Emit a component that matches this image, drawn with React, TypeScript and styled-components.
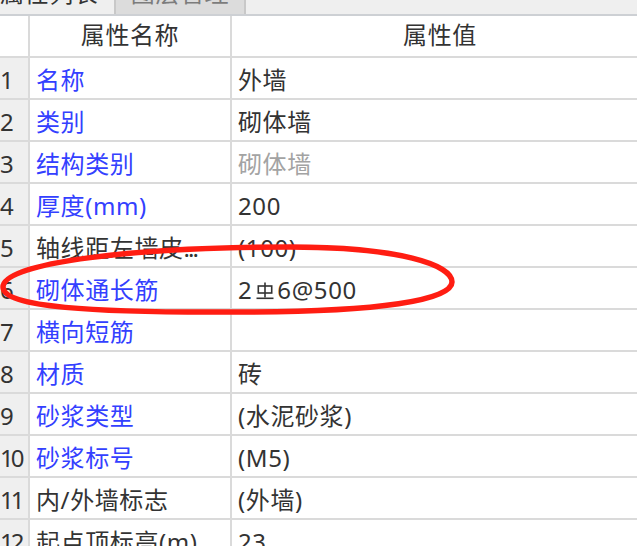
import React from "react";
import styled, { createGlobalStyle } from "styled-components";

const GlobalStyle = createGlobalStyle`
  html, body { margin: 0; padding: 0; background: #ffffff; overflow: hidden; }
  body { font-family: "Noto Sans", "Noto Sans CJK SC", sans-serif; }
`;

const Panel = styled.div`
  position: relative;
  width: 637px;
  height: 546px;
  overflow: hidden;
  background: #ffffff;
  font-family: "Noto Sans", "Noto Sans CJK SC", sans-serif;
  font-size: 24px;
  letter-spacing: 0.6px;
  color: #333333;
`;

const TabStrip = styled.div`
  display: flex;
  align-items: flex-end;
  height: 14px;
  overflow: hidden;
  background: #efefef;
  border-bottom: 2px solid #cdd0d4;
`;

const Tab = styled.div<{ $active?: boolean }>`
  flex: none;
  box-sizing: border-box;
  height: 33px;
  line-height: 24px;
  white-space: nowrap;
  width: ${(p) => (p.$active ? "114px" : "132px")};
  text-align: ${(p) => (p.$active ? "left" : "center")};
  background: ${(p) => (p.$active ? "#efefef" : "#dcdcdc")};
  color: ${(p) => (p.$active ? "#333333" : "#7c7c7c")};
  border-left: ${(p) => (p.$active ? "none" : "2px solid #c8c8c8")};
  border-right: ${(p) => (p.$active ? "none" : "2px solid #c8c8c8")};
`;

const Grid = styled.div`
  display: grid;
  grid-template-columns: 28px 200px 416px;
  grid-auto-rows: 40px;
  gap: 2px;
  width: 648px;
  background: #dadada;
`;

const BaseCell = styled.div`
  box-sizing: border-box;
  height: 40px;
  line-height: 34px;
  padding-top: 5px;
  white-space: nowrap;
  overflow: hidden;
  background: #ffffff;
`;

const HeaderCell = styled(BaseCell)`
  padding-top: 2px;
  text-align: center;
  color: #333333;
`;

const NumCell = styled(BaseCell)`
  background: #efefef;
  letter-spacing: -3px;
  color: #333333;
`;

const NameCell = styled(BaseCell)<{ $link?: boolean }>`
  padding-left: 6px;
  color: ${(p) => (p.$link ? "#3340ff" : "#333333")};
`;

const ValueCell = styled(BaseCell)<{ $muted?: boolean }>`
  padding-left: 6px;
  color: ${(p) => (p.$muted ? "#a3a3a3" : "#333333")};
`;

const Dots = styled.span`
  letter-spacing: -2px;
`;

const RebarMark = styled.svg`
  display: inline-block;
  width: 18px;
  height: 18px;
  margin: 0 3px 0 4px;
  vertical-align: -1px;
`;

const Annotation = styled.svg`
  position: absolute;
  left: 0;
  top: 0;
  width: 637px;
  height: 546px;
  pointer-events: none;
`;

type Row = {
  name: React.ReactNode;
  value: React.ReactNode;
  link?: boolean;
  muted?: boolean;
};

const Rebar = () => (
  <RebarMark viewBox="0 0 18 18" aria-label="HRB400">
    <g fill="none" stroke="#333333" strokeWidth="1.6">
      <line x1="9" y1="0.5" x2="9" y2="15.5" />
      <rect x="2.3" y="4" width="13.4" height="7" />
      <line x1="0.5" y1="16.3" x2="17.5" y2="16.3" />
    </g>
  </RebarMark>
);

const rows: Row[] = [
  { name: "名称", value: "外墙", link: true },
  { name: "类别", value: "砌体墙", link: true },
  { name: "结构类别", value: "砌体墙", link: true, muted: true },
  { name: "厚度(mm)", value: "200", link: true },
  {
    name: (
      <>
        轴线距左墙皮<Dots>...</Dots>
      </>
    ),
    value: "(100)",
  },
  {
    name: "砌体通长筋",
    value: (
      <>
        2<Rebar />6@500
      </>
    ),
    link: true,
  },
  { name: "横向短筋", value: "", link: true },
  { name: "材质", value: "砖", link: true },
  { name: "砂浆类型", value: "(水泥砂浆)", link: true },
  { name: "砂浆标号", value: "(M5)", link: true },
  { name: "内/外墙标志", value: "(外墙)" },
  { name: "起点顶标高(m)", value: "23" },
];

export default function App() {
  return (
    <>
      <GlobalStyle />
      <Panel>
        <TabStrip>
          <Tab $active>属性列表</Tab>
          <Tab>图层管理</Tab>
        </TabStrip>
        <Grid>
          <HeaderCell />
          <HeaderCell>属性名称</HeaderCell>
          <HeaderCell>属性值</HeaderCell>
          {rows.map((r, i) => (
            <React.Fragment key={i}>
              <NumCell>{i + 1}</NumCell>
              <NameCell $link={r.link}>{r.name}</NameCell>
              <ValueCell $muted={r.muted}>{r.value}</ValueCell>
            </React.Fragment>
          ))}
        </Grid>
        <Annotation viewBox="0 0 637 546">
          <path
            d="M 3 287 C 3 262, 140 247, 290 247 C 400 247, 452 265, 452 282 C 452 300, 380 312, 240 312 C 90 313, 3 307, 3 287 Z"
            fill="none"
            stroke="#ff1d12"
            strokeWidth="5.5"
          />
        </Annotation>
      </Panel>
    </>
  );
}
